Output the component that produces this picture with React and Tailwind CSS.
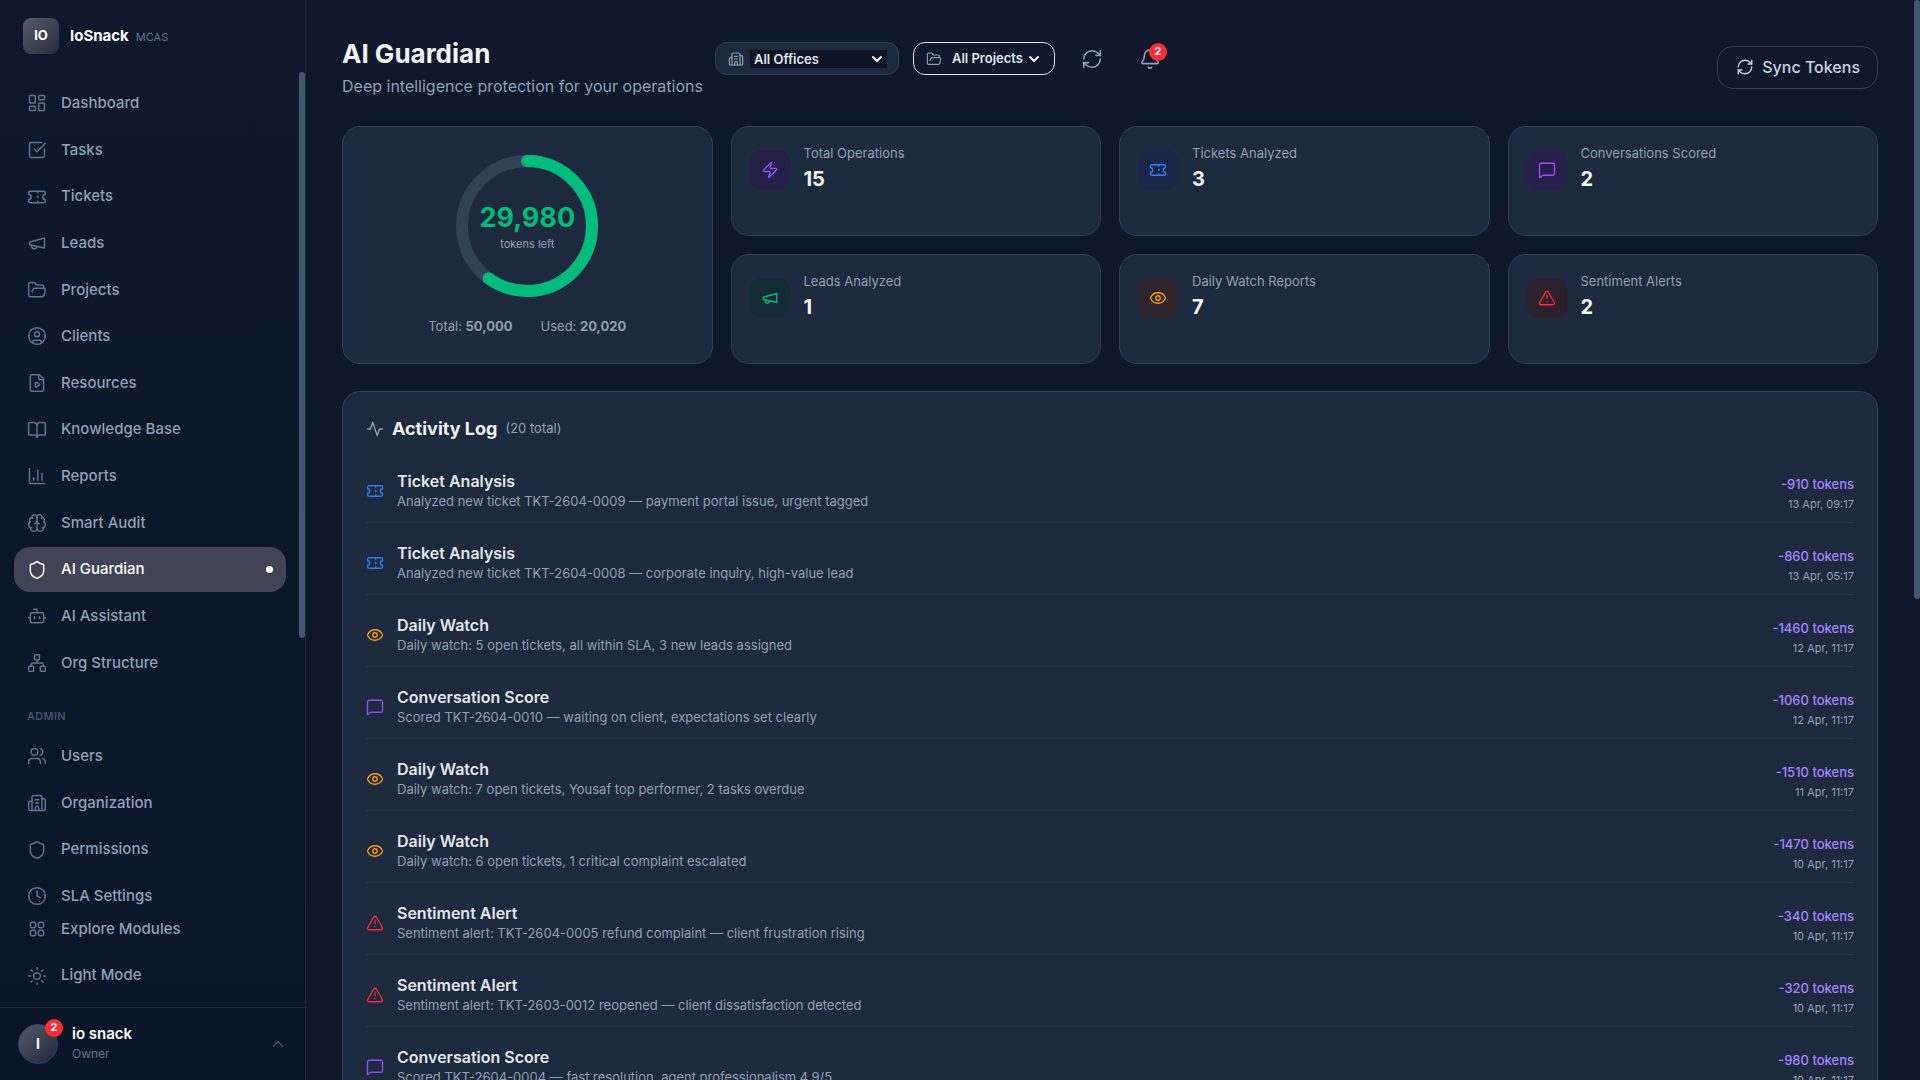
import React from "react";
import {
  LayoutDashboard, SquareCheckBig, Ticket, FolderOpen, CircleUser, FilePlay, BookOpen,
  ChartColumn, Brain, Shield, Bot, Network, Users, Building2, Clock, Sun,
  ChevronUp, ChevronDown, RefreshCw, Bell, Zap, Eye, TriangleAlert, MessageSquare,
} from "lucide-react";

function Icon({ className, children }) {
  return (
    <svg
      viewBox="0 0 24 24"
      fill="none"
      stroke="currentColor"
      strokeWidth="1.75"
      strokeLinecap="round"
      strokeLinejoin="round"
      className={className}
      aria-hidden="true"
    >
      {children}
    </svg>
  );
}

function Megaphone({ className }) {
  return (
    <Icon className={className}>
      <path d="m3 11 18-5v12L3 14v-3z" />
      <path d="M11.6 16.8a3 3 0 1 1-5.8-1.6" />
    </Icon>
  );
}

function Pulse({ className }) {
  return (
    <Icon className={className}>
      <path d="M22 12h-4l-3 9L9 3l-3 9H2" />
    </Icon>
  );
}

function Modules({ className }) {
  return (
    <Icon className={className}>
      <rect x="4" y="4" width="6.4" height="6.4" rx="2" />
      <rect x="13.6" y="4" width="6.4" height="6.4" rx="2" />
      <rect x="4" y="13.6" width="6.4" height="6.4" rx="2" />
      <rect x="13.6" y="13.6" width="6.4" height="6.4" rx="2" />
    </Icon>
  );
}

const mainNav = [
  ["Dashboard", LayoutDashboard],
  ["Tasks", SquareCheckBig],
  ["Tickets", Ticket],
  ["Leads", Megaphone],
  ["Projects", FolderOpen],
  ["Clients", CircleUser],
  ["Resources", FilePlay],
  ["Knowledge Base", BookOpen],
  ["Reports", ChartColumn],
  ["Smart Audit", Brain],
  ["AI Guardian", Shield],
  ["AI Assistant", Bot],
  ["Org Structure", Network],
];

const adminNav = [
  ["Users", Users],
  ["Organization", Building2],
  ["Permissions", Shield],
  ["SLA Settings", Clock],
];

const stats = [
  ["Total Operations", "15", Zap, "bg-[#231f47] text-violet-500"],
  ["Tickets Analyzed", "3", Ticket, "bg-[#1a2645] text-blue-500"],
  ["Conversations Scored", "2", MessageSquare, "bg-[#261f4b] text-purple-500"],
  ["Leads Analyzed", "1", Megaphone, "bg-[#142b35] text-emerald-500"],
  ["Daily Watch Reports", "7", Eye, "bg-[#2d252b] text-amber-500"],
  ["Sentiment Alerts", "2", TriangleAlert, "bg-[#2d202d] text-red-500"],
];

const kinds = {
  ticket: ["Ticket Analysis", Ticket, "text-blue-500"],
  watch: ["Daily Watch", Eye, "text-amber-500"],
  score: ["Conversation Score", MessageSquare, "text-violet-500"],
  alert: ["Sentiment Alert", TriangleAlert, "text-red-500"],
};

const log = [
  ["ticket", "Analyzed new ticket TKT-2604-0009 — payment portal issue, urgent tagged", 910, "13 Apr, 09:17"],
  ["ticket", "Analyzed new ticket TKT-2604-0008 — corporate inquiry, high-value lead", 860, "13 Apr, 05:17"],
  ["watch", "Daily watch: 5 open tickets, all within SLA, 3 new leads assigned", 1460, "12 Apr, 11:17"],
  ["score", "Scored TKT-2604-0010 — waiting on client, expectations set clearly", 1060, "12 Apr, 11:17"],
  ["watch", "Daily watch: 7 open tickets, Yousaf top performer, 2 tasks overdue", 1510, "11 Apr, 11:17"],
  ["watch", "Daily watch: 6 open tickets, 1 critical complaint escalated", 1470, "10 Apr, 11:17"],
  ["alert", "Sentiment alert: TKT-2604-0005 refund complaint — client frustration rising", 340, "10 Apr, 11:17"],
  ["alert", "Sentiment alert: TKT-2603-0012 reopened — client dissatisfaction detected", 320, "10 Apr, 11:17"],
  ["score", "Scored TKT-2604-0004 — fast resolution, agent professionalism 4.9/5", 980, "10 Apr, 11:17"],
];

function NavItem({ label, icon: Glyph, active }) {
  return (
    <a
      href="#"
      aria-current={active ? "page" : undefined}
      className={
        active
          ? "flex items-center gap-3.5 rounded-2xl bg-[#404454] px-[13px] py-3 text-[15px] leading-snug font-medium text-white"
          : "flex items-center gap-3.5 rounded-2xl px-[13px] py-3 text-[15px] leading-snug font-medium text-slate-400"
      }
    >
      <Glyph
        strokeWidth={1.75}
        className={active ? "size-5 shrink-0" : "size-5 shrink-0 text-slate-500"}
      />
      <span className="flex-1">{label}</span>
      {active && <span className="size-[7px] rounded-full bg-white" />}
    </a>
  );
}

function Sidebar() {
  return (
    <aside className="relative flex w-[306px] shrink-0 flex-col border-r border-slate-800 bg-linear-to-b from-slate-900 to-[#0a1628]">
      <div className="flex h-[72px] shrink-0 items-center gap-[11px] px-[23px]">
        <div className="flex size-9 items-center justify-center rounded-lg bg-linear-to-br from-[#565b6a] to-[#282d3d] text-[13px] font-bold text-white">
          IO
        </div>
        <div className="flex items-baseline gap-[7px]">
          <span className="text-[15px] leading-6 font-bold text-white">IoSnack</span>
          <span className="text-[11px] text-slate-500">MCAS</span>
        </div>
      </div>
      <nav aria-label="Main" className="min-h-0 flex-1 overflow-hidden pt-[9px] pr-[19px] pl-3.5">
        <div className="flex flex-col gap-0.5">
          {mainNav.map(([label, icon]) => (
            <NavItem key={label} label={label} icon={icon} active={label === "AI Guardian"} />
          ))}
        </div>
        <h2 className="px-[13px] pt-[21px] pb-2 text-[11px] leading-5 font-semibold tracking-wide text-slate-600">ADMIN</h2>
        <div className="flex flex-col gap-0.5">
          {adminNav.map(([label, icon]) => (
            <NavItem key={label} label={label} icon={icon} />
          ))}
        </div>
      </nav>
      <div className="flex shrink-0 flex-col gap-0.5 px-3.5 pb-[9px]">
        <NavItem label="Explore Modules" icon={Modules} />
        <NavItem label="Light Mode" icon={Sun} />
      </div>
      <button type="button" className="flex shrink-0 items-center gap-3.5 border-t border-slate-800 px-[18px] py-4 text-left">
        <span className="relative flex size-10 items-center justify-center rounded-full border border-[#2b4166] bg-linear-to-br from-[#565b6a] to-[#1e293b] text-sm font-bold text-white">
          I
          <span className="absolute -top-1.5 -right-1.5 flex size-[18px] items-center justify-center rounded-full bg-red-500 text-[11px] font-bold">
            2
          </span>
        </span>
        <span className="flex flex-1 flex-col">
          <span className="text-[15px] leading-5 font-semibold text-white">io snack</span>
          <span className="text-[12px] leading-5 text-slate-500">Owner</span>
        </span>
        <ChevronUp className="size-[18px] text-slate-600" strokeWidth={1.75} />
      </button>
      <div className="absolute top-[72px] right-0 h-[566px] w-1.5 rounded-full bg-slate-600" />
    </aside>
  );
}

function TokenRing() {
  const radius = 65;
  const length = 2 * Math.PI * radius;
  return (
    <div className="relative size-[142px]">
      <svg viewBox="0 0 142 142" className="size-full -rotate-90" aria-hidden="true">
        <circle cx="71" cy="71" r={radius} fill="none" strokeWidth="12" className="stroke-slate-700" />
        <circle
          cx="71"
          cy="71"
          r={radius}
          fill="none"
          strokeWidth="12"
          strokeLinecap="round"
          strokeDasharray={`${length * 0.5996} ${length}`}
          className="stroke-emerald-500"
        />
      </svg>
      <div className="absolute inset-0 flex flex-col items-center justify-center pt-1">
        <span className="text-[27px] leading-8 font-bold text-emerald-500">29,980</span>
        <span className="text-[11px] leading-5 text-slate-400">tokens left</span>
      </div>
    </div>
  );
}

function Header() {
  return (
    <header className="flex items-center justify-between">
      <div className="flex items-start gap-3">
        <div>
          <h1 className="text-[26px] leading-9 font-bold text-slate-100">AI Guardian</h1>
          <p className="mt-0.5 text-base leading-6 text-slate-400">Deep intelligence protection for your operations</p>
        </div>
        <div className="mt-1.5 flex items-center">
          <div className="relative flex h-[33px] items-center gap-1.5 rounded-xl border border-slate-700 bg-slate-800 pr-[11px] pl-3 text-slate-400">
            <Building2 className="size-4" strokeWidth={1.75} />
            <select
              aria-label="Office"
              className="h-[18px] w-[137px] appearance-none bg-[#0d1424] pl-1 text-[13px] leading-[18px] font-semibold text-slate-200"
            >
              <option>All Offices</option>
            </select>
            <ChevronDown className="pointer-events-none absolute right-[13px] size-4 text-slate-100" strokeWidth={3} />
          </div>
          <button
            type="button"
            className="ml-3.5 flex h-[33px] items-center rounded-xl border border-slate-200 px-3 text-[13px] font-semibold text-slate-200"
          >
            <FolderOpen className="mr-2.5 size-4 text-slate-400" strokeWidth={1.75} />
            All Projects
            <ChevronDown className="ml-[3px] size-4 text-slate-100" strokeWidth={3} />
          </button>
          <button type="button" aria-label="Refresh" className="ml-[26px] text-slate-400">
            <RefreshCw className="size-[22px]" strokeWidth={1.75} />
          </button>
          <button type="button" aria-label="Notifications" className="relative ml-9 text-slate-400">
            <Bell className="size-[22px]" strokeWidth={1.75} />
            <span className="absolute -top-[5px] -right-[6px] flex size-[18px] items-center justify-center rounded-full bg-red-500 text-[11px] font-bold text-white">
              2
            </span>
          </button>
        </div>
      </div>
      <button
        type="button"
        className="flex items-center gap-2 rounded-2xl border border-slate-700 pt-2 pr-[17px] pb-[9px] pl-[18px] text-base font-medium text-slate-300"
      >
        <RefreshCw className="size-[18px]" strokeWidth={1.75} />
        Sync Tokens
      </button>
    </header>
  );
}

export default function App() {
  return (
    <div className="relative flex h-screen overflow-hidden bg-slate-900 font-[Inter,sans-serif]">
      <Sidebar />
      <main className="min-w-0 flex-1 overflow-hidden py-9 pr-[42px] pl-9">
        <Header />
        <section aria-label="Usage" className="mt-7 grid grid-cols-4 grid-rows-2 gap-[18px]">
          <div className="row-span-2 flex flex-col items-center rounded-[18px] border border-slate-700 bg-slate-800 pt-7 pb-[27px]">
            <TokenRing />
            <div className="mt-[19px] flex gap-7 text-[13px] leading-5 text-slate-400">
              <span>Total: <b className="font-bold">50,000</b></span>
              <span>Used: <b className="font-bold">20,020</b></span>
            </div>
          </div>
          {stats.map(([label, value, Glyph, tone]) => (
            <div key={label} className="flex items-start gap-3.5 rounded-[18px] border border-slate-700 bg-slate-800 p-[18px]">
              <div className={`mt-[5px] flex size-10 items-center justify-center rounded-xl ${tone}`}>
                <Glyph className="size-[18px]" strokeWidth={1.75} />
              </div>
              <div>
                <div className="text-[13px] leading-4 text-slate-400">{label}</div>
                <div className="mt-0.5 text-xl leading-8 font-bold text-slate-100">{value}</div>
              </div>
            </div>
          ))}
        </section>
        <section className="mt-[27px] rounded-[18px] border border-slate-700 bg-slate-800 px-[23px] py-[23px]">
          <div className="flex items-center gap-2">
            <Pulse className="size-[18px] text-slate-400" />
            <h2 className="text-lg leading-7 font-bold text-slate-100">Activity Log</h2>
            <span className="text-[13px] text-slate-400">(20 total)</span>
          </div>
          <ul className="mt-4 flex flex-col gap-2">
            {log.map(([kind, detail, tokens, date]) => {
              const [title, Glyph, color] = kinds[kind];
              return (
                <li key={detail} className="flex h-16 items-center gap-[13px] border-b border-slate-700/50">
                  <Glyph className={`size-[18px] shrink-0 ${color}`} strokeWidth={1.75} />
                  <div className="min-w-0 flex-1">
                    <div className="text-base leading-5 font-semibold text-slate-200">{title}</div>
                    <div className="text-[13px] leading-5 text-slate-400">{detail}</div>
                  </div>
                  <div className="pt-1.5 text-right">
                    <div className="text-[13px] leading-5 font-medium text-violet-400">-{tokens} tokens</div>
                    <div className="text-[11px] leading-5 text-slate-400">{date}</div>
                  </div>
                </li>
              );
            })}
          </ul>
        </section>
      </main>
      <div className="absolute top-0 right-0 h-[599px] w-1.5 rounded-full bg-slate-600" />
    </div>
  );
}
